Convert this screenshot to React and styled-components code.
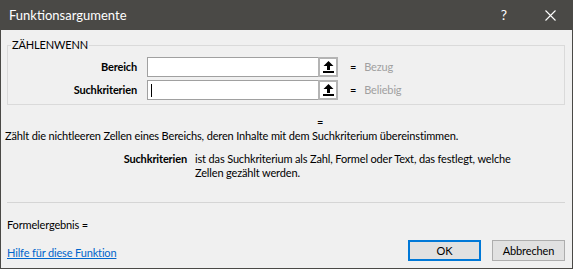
import React from "react";
import styled, { createGlobalStyle } from "styled-components";

const Global = createGlobalStyle`
  html, body { margin: 0; padding: 0; background: #f0f0f0; }
  body { font-family: Lato, "Liberation Sans", sans-serif; font-size: 11px; letter-spacing: -0.15px; line-height: 14px; color: #000; }
`;

const Window = styled.div`
  width: 573px;
  height: 269px;
  box-sizing: border-box;
  border: 1px solid #4a4946;
  border-top: none;
  background: #f0f0f0;
  display: flex;
  flex-direction: column;
  overflow: hidden;
`;

const TitleBar = styled.div`
  height: 30px;
  flex: none;
  background: #4a4946;
  color: #fff;
  display: flex;
  align-items: center;
  padding-left: 9px;
  font-size: 13px;
  letter-spacing: 0;
  margin: 0 -1px;
`;

const Title = styled.div`
  flex: 1;
`;

const TitleButton = styled.div`
  width: 46px;
  height: 30px;
  display: flex;
  align-items: center;
  justify-content: center;
  font-size: 14px;
`;

const Body = styled.div`
  flex: 1;
  display: flex;
  flex-direction: column;
  padding: 0 7px 0 6px;
`;

const Group = styled.fieldset`
  margin: 8px 0 0 0;
  padding: 5px 0 4px 0;
  border: 1px solid #dadada;
  min-width: 0;
`;

const Legend = styled.legend`
  padding: 0 1px;
  margin-left: 3px;
  line-height: 14px;
`;

const ArgGrid = styled.div`
  display: grid;
  grid-template-columns: 129px 191px auto 1fr;
  column-gap: 10px;
  row-gap: 3px;
  align-items: center;
`;

const ArgLabel = styled.div`
  text-align: right;
  font-weight: 700;
`;

const InputWrap = styled.div`
  display: flex;
  height: 20px;
`;

const TextBox = styled.div`
  flex: 1;
  background: #fff;
  border: 1px solid #a0a0a0;
  border-right: none;
  display: flex;
  align-items: center;
  padding-left: 3px;
`;

const Caret = styled.span`
  width: 1px;
  height: 13px;
  background: #000;
`;

const RefButton = styled.div`
  width: 20px;
  box-sizing: border-box;
  border: 2px solid #b4b4b4;
  background: #fff;
  display: flex;
  align-items: center;
  justify-content: center;
`;

const Eq = styled.div`
  padding-left: 2px;
`;

const ArgValue = styled.div`
  color: #a0a0a0;
  margin-left: -2px;
`;

const ResultEq = styled.div`
  margin-top: 11px;
  padding-left: 310px;
  height: 12px;
  line-height: 12px;
`;

const Description = styled.div`
  margin-top: 1px;
  margin-left: -2px;
  white-space: nowrap;
`;

const ArgHelp = styled.div`
  display: grid;
  grid-template-columns: 180px 1fr;
  column-gap: 8px;
  margin-top: 9px;
`;

const ArgHelpLabel = styled.div`
  text-align: right;
  font-weight: 700;
`;

const ArgHelpText = styled.div`
  white-space: nowrap;
`;

const Separator = styled.div`
  margin-top: 22px;
  border-top: 1px solid #d5d5d5;
`;

const Result = styled.div`
  margin-top: 15px;
`;

const Footer = styled.div`
  display: flex;
  align-items: center;
  margin-top: 8px;
`;

const HelpLink = styled.a`
  flex: 1;
  padding-top: 4px;
  color: #0066cc;
  text-decoration: underline;
  cursor: pointer;
`;

const Button = styled.div`
  width: 73px;
  height: 21px;
  box-sizing: border-box;
  display: flex;
  align-items: center;
  justify-content: center;
  background: #e1e1e1;
  border: ${(p) => (p.$default ? "2px solid #0078d7" : "1px solid #adadad")};
  margin-left: ${(p) => (p.$default ? "0" : "11px")};
`;

const UpIcon = () => (
  <svg width="11" height="12" viewBox="0 0 11 12">
    <path d="M5.5 0 L10.5 5 L7 5 L7 9 L4 9 L4 5 L0.5 5 Z" fill="#000" />
    <rect x="0" y="10" width="11" height="2" fill="#000" />
  </svg>
);

const CloseIcon = () => (
  <svg width="11" height="11" viewBox="0 0 11 11">
    <path d="M0.5 0.5 L10.5 10.5 M10.5 0.5 L0.5 10.5" stroke="#fff" strokeWidth="1.1" />
  </svg>
);

const args = [
  { label: "Bereich", value: "Bezug", focused: false },
  { label: "Suchkriterien", value: "Beliebig", focused: true },
];

export default function App() {
  return (
    <>
      <Global />
      <Window>
        <TitleBar>
          <Title>Funktionsargumente</Title>
          <TitleButton>?</TitleButton>
          <TitleButton>
            <CloseIcon />
          </TitleButton>
        </TitleBar>
        <Body>
          <Group>
            <Legend>ZÄHLENWENN</Legend>
            <ArgGrid>
              {args.map((a) => (
                <React.Fragment key={a.label}>
                  <ArgLabel>{a.label}</ArgLabel>
                  <InputWrap>
                    <TextBox>{a.focused && <Caret />}</TextBox>
                    <RefButton>
                      <UpIcon />
                    </RefButton>
                  </InputWrap>
                  <Eq>=</Eq>
                  <ArgValue>{a.value}</ArgValue>
                </React.Fragment>
              ))}
            </ArgGrid>
          </Group>
          <ResultEq>=</ResultEq>
          <Description>
            Zählt die nichtleeren Zellen eines Bereichs, deren Inhalte mit dem Suchkriterium übereinstimmen.
          </Description>
          <ArgHelp>
            <ArgHelpLabel>Suchkriterien</ArgHelpLabel>
            <ArgHelpText>
              ist das Suchkriterium als Zahl, Formel oder Text, das festlegt, welche
              <br />
              Zellen gezählt werden.
            </ArgHelpText>
          </ArgHelp>
          <Separator />
          <Result>Formelergebnis =</Result>
          <Footer>
            <HelpLink>Hilfe für diese Funktion</HelpLink>
            <Button $default>OK</Button>
            <Button>Abbrechen</Button>
          </Footer>
        </Body>
      </Window>
    </>
  );
}
